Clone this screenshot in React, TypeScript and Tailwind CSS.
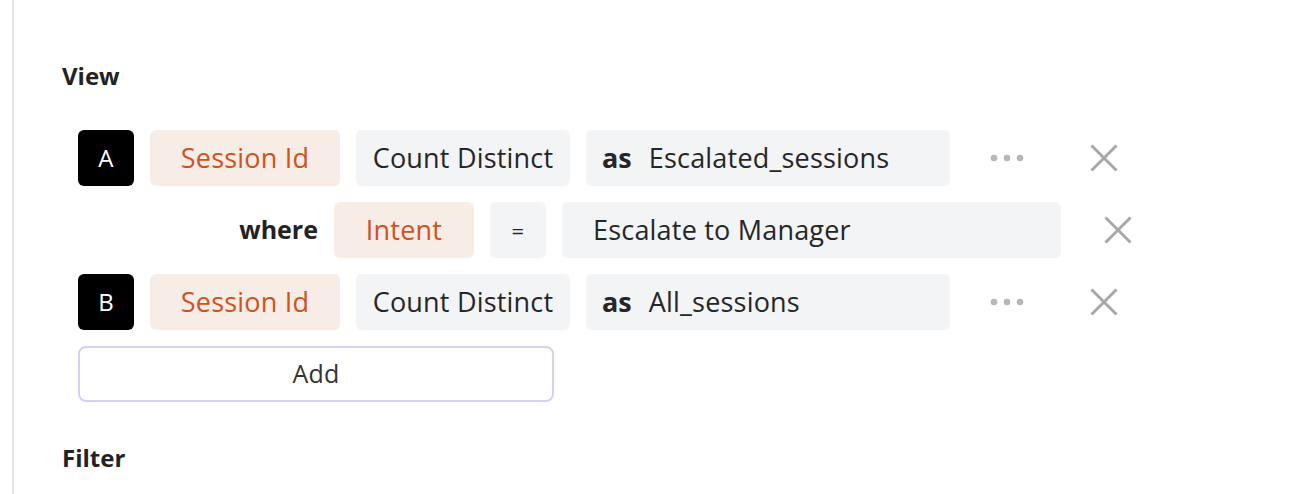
import React from 'react';

const font = { fontFamily: '"Open Sans", "Liberation Sans", sans-serif' };

const CloseIcon: React.FC = () => (
  <svg width="28" height="28" viewBox="0 0 28 28" fill="none">
    <path d="M1.5 1.5L26.5 26.5M26.5 1.5L1.5 26.5" stroke="#a8a8a8" strokeWidth="3" />
  </svg>
);

const DotsIcon: React.FC = () => (
  <svg width="34" height="8" viewBox="0 0 34 8" fill="#b8b8b8">
    <circle cx="4" cy="4" r="3.3" />
    <circle cx="17" cy="4" r="3.3" />
    <circle cx="30" cy="4" r="3.3" />
  </svg>
);

const Letter: React.FC<{ label: string }> = ({ label }) => (
  <div className="w-14 h-14 rounded-md bg-black text-white flex items-center justify-center text-[24px]">
    {label}
  </div>
);

const MeasureRow: React.FC<{ label: string; alias: string }> = ({ label, alias }) => (
  <div className="flex items-center h-14">
    <Letter label={label} />
    <div className="ml-4 w-[190px] h-14 rounded-md bg-[#f8ece6] text-[#cf5124] flex items-center justify-center">
      Session Id
    </div>
    <div className="ml-4 w-[214px] h-14 rounded-md bg-[#f3f4f6] text-[#262626] flex items-center justify-center">
      Count Distinct
    </div>
    <div className="ml-4 w-[364px] h-14 rounded-md bg-[#f3f4f6] text-[#262626] flex items-center pl-4">
      <span className="font-bold tracking-normal">as</span>
      <span className="ml-[17px]">{alias}</span>
    </div>
    <div className="ml-10 flex items-center">
      <DotsIcon />
    </div>
    <div className="ml-[66px] flex items-center">
      <CloseIcon />
    </div>
  </div>
);

export default function App() {
  return (
    <div className="min-h-screen bg-white" style={font}>
      <div className="ml-3 min-h-screen border-l-2 border-[#e6e6e6] pl-12 pt-[60px]">
        <h2 className="text-[24px] leading-8 font-bold text-[#222]">View</h2>

        <div className="mt-[38px] ml-4 flex flex-col gap-4 text-[27px] tracking-[0.2px]">
          <MeasureRow label="A" alias="Escalated_sessions" />

          <div className="flex items-center h-14">
            <div className="w-[240px] text-right font-bold text-[25px] text-[#222] tracking-normal">where</div>
            <div className="ml-4 w-[140px] h-14 rounded-md bg-[#f8ece6] text-[#cf5124] flex items-center justify-center">
              Intent
            </div>
            <div className="ml-4 w-14 h-14 rounded-md bg-[#f3f4f6] text-[#262626] flex items-center justify-center text-[22px]">
              =
            </div>
            <div className="ml-4 w-[499px] h-14 rounded-md bg-[#f3f4f6] text-[#262626] flex items-center pl-[31px]">
              Escalate to Manager
            </div>
            <div className="ml-[43px] flex items-center">
              <CloseIcon />
            </div>
          </div>

          <MeasureRow label="B" alias="All_sessions" />

          <button className="w-[476px] h-14 rounded-lg border-2 border-[#d2d2f7] bg-white text-[#333] text-[25px]">
            Add
          </button>
        </div>

        <h2 className="mt-10 text-[24px] leading-8 font-bold text-[#222]">Filter</h2>
      </div>
    </div>
  );
}
